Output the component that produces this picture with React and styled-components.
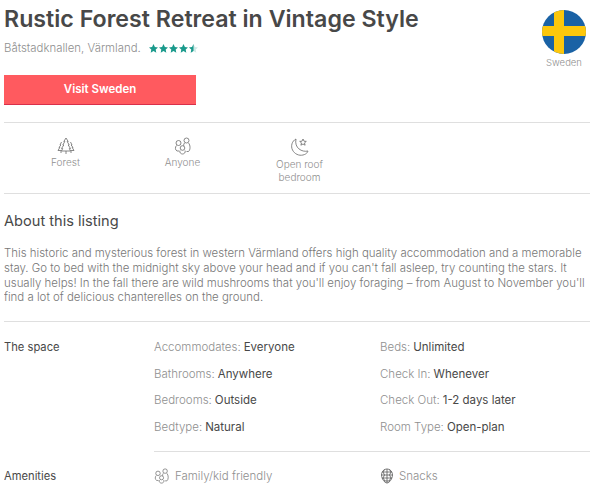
import React from "react";
import styled, { createGlobalStyle } from "styled-components";

const GlobalStyle = createGlobalStyle`
  html, body {
    margin: 0;
    padding: 0;
    background: #fff;
    overflow: hidden;
  }
  body {
    font-family: "Inter", "Liberation Sans", sans-serif;
    color: #484848;
  }
`;

const Page = styled.div`
  width: 586px;
  height: 489px;
  margin-left: 4px;
  overflow: hidden;
`;

const Header = styled.header`
  display: flex;
  justify-content: space-between;
  height: 122px;
  border-bottom: 1px solid #dfdfdf;
`;

const Title = styled.h1`
  margin: 0;
  padding-top: 3px;
  font-size: 23.2px;
  line-height: 32px;
  font-weight: 600;
  color: #484848;
`;

const Location = styled.div`
  display: flex;
  align-items: center;
  margin-top: 4px;
  font-size: 11.4px;
  font-weight: 300;
  line-height: 18px;
  color: #8f8f8f;
`;

const Stars = styled.span`
  display: flex;
  margin-left: 8px;
  gap: 1px;
`;

const VisitButton = styled.button`
  display: block;
  width: 192px;
  height: 29.500px;
  margin-top: 18px;
  border: 0;
  border-bottom: 1px solid #d9304a;
  background: #ff5a5f;
  color: #fff;
  font: 600 11.5px "Inter", sans-serif;
`;

const Country = styled.div`
  display: flex;
  flex-direction: column;
  align-items: center;
  width: 46px;
  margin-right: 3px;
  padding-top: 10px;
  font-size: 9.5px;
  font-weight: 300;
  line-height: 18px;
  color: #8f8f8f;
`;

const Features = styled.div`
  display: flex;
  height: 70px;
  padding-left: 3px;
  border-bottom: 1px solid #dfdfdf;
`;

const Feature = styled.div`
  display: flex;
  flex-direction: column;
  align-items: center;
  width: 117px;
  padding-top: 14px;
  font-size: 10px;
  font-weight: 300;
  line-height: 12.500px;
  text-align: center;
  color: #8f8f8f;
  svg {
    margin-bottom: 1px;
  }
`;

const About = styled.section`
  padding: 17px 0 16px;
  border-bottom: 1px solid #dfdfdf;
`;

const Heading = styled.h2`
  margin: 0 0 15px;
  font-size: 14.6px;
  line-height: 20px;
  font-weight: 400;
  color: #484848;
`;

const Body = styled.p`
  margin: 0;
  font-size: 11.45px;
  font-weight: 300;
  line-height: 14.8px;
  color: #777;
`;

const Row = styled.div`
  display: grid;
  grid-template-columns: 150px 226px 1fr;
`;

const Label = styled.div`
  font-size: 11.2px;
  line-height: 16px;
  color: #484848;
`;

const Cell = styled.div`
  font-size: 11.5px;
  font-weight: 300;
  line-height: 16px;
  margin-bottom: 10.5px;
  color: #8f8f8f;
  display: flex;
  align-items: center;
  gap: 5px;
`;

const Value = styled.span`
  font-weight: 400;
  color: #484848;
  margin-left: -2px;
`;

const Divider = styled.div`
  margin: 6px 0 16px 150px;
  border-top: 1px solid #dfdfdf;
`;

const Space = styled.div`
  padding-top: 17px;
`;

const Flag = () => (
  <svg width="44" height="44" viewBox="0 0 44 44">
    <clipPath id="flag-clip"><circle cx="22" cy="22" r="22" /></clipPath>
    <g clipPath="url(#flag-clip)">
      <rect width="44" height="44" fill="#1a62a5" />
      <rect x="12" width="10" height="44" fill="#fdc70c" />
      <rect y="16" width="44" height="10" fill="#fdc70c" />
    </g>
  </svg>
);

const STAR_POINTS = "4.500,0 5.900,3 9,3.400 6.700,5.500 7.300,8.700 4.500,7.100 1.700,8.700 2.300,5.500 0,3.400 3.100,3";

const Star = ({ half }) => (
  <svg width="9" height="9" viewBox="0 0 9 9">
    <polygon points={STAR_POINTS} fill={half ? "#cfe9e6" : "#1a9a8c"} />
    {half && <polygon points="4.500,0 4.500,7.100 1.700,8.700 2.300,5.500 0,3.400 3.100,3" fill="#1a9a8c" />}
  </svg>
);

const Trees = () => (
  <svg width="18" height="18" viewBox="0 0 18 18" fill="none" stroke="#6a6a6a" strokeWidth="0.8" strokeLinejoin="round">
    <path d="M4.500 5L3 8h.8L2 10.500h.8L1 13.500h3.500" />
    <path d="M9 1L6.800 4.500h1L5.800 8h1L4.500 11.500h1.200L4.500 14H13.500l-1.200-2.500h1.200L11.200 8h1L10.200 4.500h1z" />
    <path d="M13.500 5L15 8h-.8L16 10.500h-.8l1.800 3h-3.500" />
    <path d="M9 14v3M4 14v2M14 14v2" />
  </svg>
);

const People = ({ size = 18 }) => (
  <svg width={size} height={size} viewBox="0 0 18 18" fill="none" stroke="#6a6a6a" strokeWidth="0.8">
    <circle cx="4.500" cy="6" r="2.500" />
    <path d="M2.500 8.500C1 10 1 13 3 14h2" />
    <circle cx="12.500" cy="3.500" r="2.500" />
    <path d="M10.500 6C9 8 10 9 10 9M14.500 6c2 2 2 7 0 8.500h-2" />
    <circle cx="8.500" cy="11" r="2.300" />
    <path d="M6 13.500c-1 2 1 3.500 2.500 3.500s3.500-1.500 2.500-3.500" />
  </svg>
);

const Moon = () => (
  <svg width="20" height="20" viewBox="0 0 20 20" fill="none" stroke="#6a6a6a" strokeWidth="0.8" strokeLinejoin="round">
    <path d="M6 2C2 4 .5 9 2.500 13S9 19 13 18 17.500 15 18 14C12 15.500 4 11 6 2z" />
    <path d="M13 2l1 2.200 2.300.2-1.800 1.500.6 2.300-2.100-1.200-2.100 1.200.6-2.300-1.800-1.500 2.300-.2z" />
  </svg>
);

const Berry = () => (
  <svg width="14" height="16" viewBox="0 0 14 16" fill="none" stroke="#5a5a5a" strokeWidth="0.8">
    <path d="M7 1C4 1 1.500 3.500 1.500 7S4.500 15 7 15s5.500-4.500 5.500-8S10 1 7 1z" />
    <path d="M2 4h10M1.500 7h11M2 10h10M4 13h6M4.500 1.500L3 4l1.500 3L3 10l2 3M9.500 1.500L11 4 9.500 7l1.500 3-2 3M7 1v14" />
  </svg>
);

const rows = [
  ["Accommodates:", "Everyone", "Beds:", "Unlimited"],
  ["Bathrooms:", "Anywhere", "Check In:", "Whenever"],
  ["Bedrooms:", "Outside", "Check Out:", "1-2 days later"],
  ["Bedtype:", "Natural", "Room Type:", "Open-plan"],
];

export default function App() {
  return (
    <Page>
      <GlobalStyle />
      <Header>
        <div>
          <Title>Rustic Forest Retreat in Vintage Style</Title>
          <Location>
            Båtstadknallen, Värmland.
            <Stars>
              <Star /><Star /><Star /><Star /><Star half />
            </Stars>
          </Location>
          <VisitButton>Visit Sweden</VisitButton>
        </div>
        <Country>
          <Flag />
          Sweden
        </Country>
      </Header>
      <Features>
        <Feature><Trees />Forest</Feature>
        <Feature><People />Anyone</Feature>
        <Feature><Moon />Open roof<br />bedroom</Feature>
      </Features>
      <About>
        <Heading>About this listing</Heading>
        <Body>
          This historic and mysterious forest in western Värmland offers high quality accommodation and a memorable stay. Go to bed with the midnight sky above your head and if you can't fall asleep, try counting the stars. It usually helps! In the fall there are wild mushrooms that you'll enjoy foraging – from August to November you'll find a lot of delicious chanterelles on the ground.
        </Body>
      </About>
      <Space>
        <Row>
          <Label>The space</Label>
          <div>
            {rows.map((r) => (
              <Cell key={r[0]}>{r[0]} <Value>{r[1]}</Value></Cell>
            ))}
          </div>
          <div>
            {rows.map((r) => (
              <Cell key={r[2]}>{r[2]} <Value>{r[3]}</Value></Cell>
            ))}
          </div>
        </Row>
        <Divider />
        <Row>
          <Label>Amenities</Label>
          <Cell><People size={16} />Family/kid friendly</Cell>
          <Cell><Berry />Snacks</Cell>
        </Row>
      </Space>
    </Page>
  );
}
